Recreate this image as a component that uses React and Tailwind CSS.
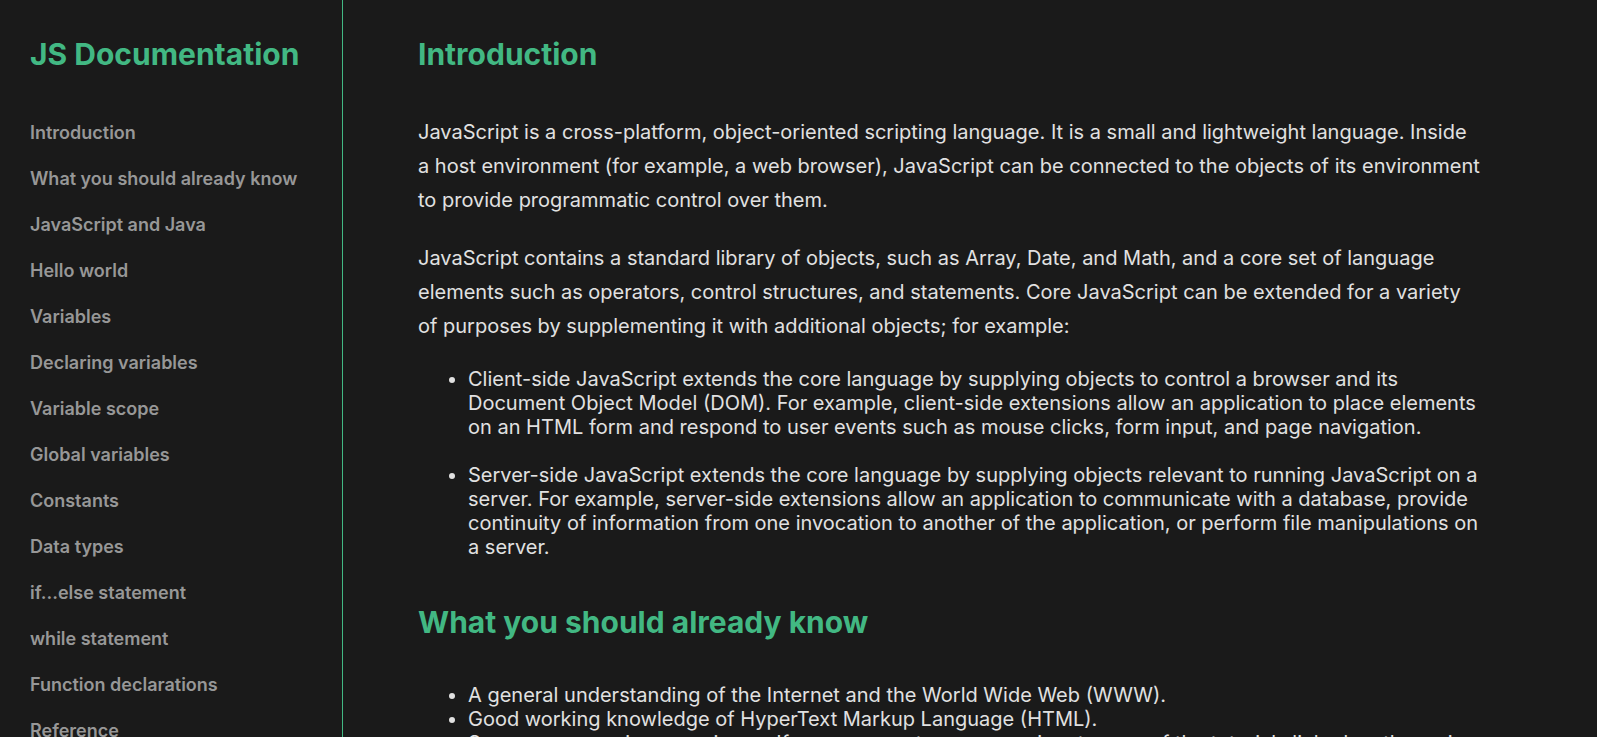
const links = [
  ['Introduction', 'introduction'],
  ['What you should already know', 'what-you-should-already-know'],
  ['JavaScript and Java', 'javascript-and-java'],
  ['Hello world', 'hello-world'],
  ['Variables', 'variables'],
  ['Declaring variables', 'declaring-variables'],
  ['Variable scope', 'variable-scope'],
  ['Global variables', 'global-variables'],
  ['Constants', 'constants'],
  ['Data types', 'data-types'],
  ['if...else statement', 'if-else-statement'],
  ['while statement', 'while-statement'],
  ['Function declarations', 'function-declarations'],
  ['Reference', 'reference'],
];

function Sidebar() {
  return (
    <nav
      aria-label="JS Documentation"
      className="w-[343px] shrink-0 overflow-y-auto border-r border-[#42b883] px-[30px] pt-9 [scrollbar-width:none]"
    >
      <h1 className="text-3xl leading-9 font-bold whitespace-nowrap text-[#42b883]">JS Documentation</h1>
      <ul className="mt-[38px]">
        {links.map(([label, id]) => (
          <li key={id}>
            <a
              href={`#${id}`}
              className="block py-[11px] text-lg leading-6 font-semibold text-[#979797] hover:text-[#42b883]"
            >
              {label}
            </a>
          </li>
        ))}
      </ul>
    </nav>
  );
}

function Section({ id, title, children }) {
  return (
    <section id={id} className="mb-[45px]">
      <h2 className="mb-[43px] text-3xl leading-9 font-bold text-[#42b883]">{title}</h2>
      {children}
    </section>
  );
}

export default function App() {
  return (
    <div className="flex h-screen bg-[#1a1a1a] font-['Inter',sans-serif] text-[#e1e1e1]">
      <Sidebar />
      <main className="min-w-0 flex-1 overflow-y-auto pt-9 pr-[116px] pl-[75px] text-xl leading-6 [scrollbar-width:none]">
        <Section id="introduction" title="Introduction">
          <p className="mb-6 leading-[34px]">
            JavaScript is a cross-platform, object-oriented scripting language. It is a small and
            lightweight language. Inside a host environment (for example, a web browser), JavaScript
            can be connected to the objects of its environment to provide programmatic control over
            them.
          </p>
          <p className="mb-6 leading-[34px]">
            JavaScript contains a standard library of objects, such as Array, Date, and Math, and a
            core set of language elements such as operators, control structures, and statements. Core
            JavaScript can be extended for a variety of purposes by supplementing it with additional
            objects; for example:
          </p>
          <ul className="list-disc space-y-6 pl-[50px]">
            <li>
              Client-side JavaScript extends the core language by supplying objects to control a
              browser and its Document Object Model (DOM). For example, client-side extensions allow
              an application to place elements on an HTML form and respond to user events such as
              mouse clicks, form input, and page navigation.
            </li>
            <li>
              Server-side JavaScript extends the core language by supplying objects relevant to
              running JavaScript on a server. For example, server-side extensions allow an
              application to communicate with a database, provide continuity of information from one
              invocation to another of the application, or perform file manipulations on a server.
            </li>
          </ul>
        </Section>
        <Section id="what-you-should-already-know" title="What you should already know">
          <ul className="list-disc pl-[50px]">
            <li>A general understanding of the Internet and the World Wide Web (WWW).</li>
            <li>Good working knowledge of HyperText Markup Language (HTML).</li>
            <li>
              Some programming experience. If you are new to programming, try one of the tutorials
              linked on the main page about JavaScript.
            </li>
          </ul>
        </Section>
      </main>
    </div>
  );
}
